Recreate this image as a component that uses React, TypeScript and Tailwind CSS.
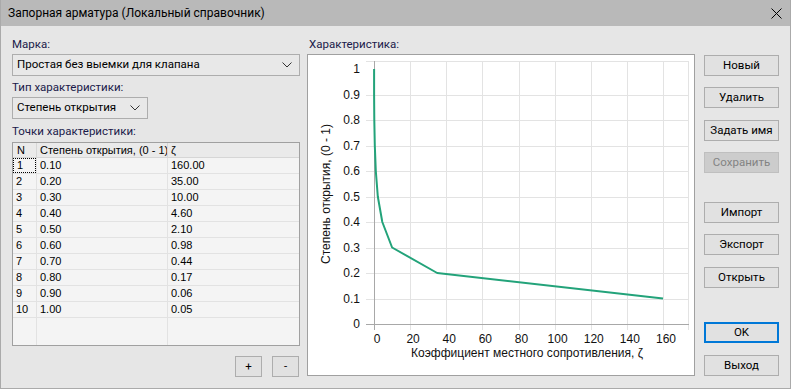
import React from "react";

const rows = [
  ["1", "0.10", "160.00"],
  ["2", "0.20", "35.00"],
  ["3", "0.30", "10.00"],
  ["4", "0.40", "4.60"],
  ["5", "0.50", "2.10"],
  ["6", "0.60", "0.98"],
  ["7", "0.70", "0.44"],
  ["8", "0.80", "0.17"],
  ["9", "0.90", "0.06"],
  ["10", "1.00", "0.05"],
];

// chart scale (svg coords, origin inside the chart frame)
const X0 = 66;
const Y0 = 269;
const sx = (z: number) => X0 + z * (289 / 160);
const sy = (v: number) => Y0 - v * 255;

const Chevron = () => (
  <svg width="10" height="6" viewBox="0 0 10 6" className="shrink-0">
    <polyline points="0.5,0.5 5,5 9.5,0.5" fill="none" stroke="#333" strokeWidth="1" />
  </svg>
);

const Btn = ({ label, className = "" }: { label: string; className?: string }) => (
  <div
    className={`h-[21px] w-[75px] flex items-center justify-center border border-[#adadad] bg-[#e1e1e1] text-[11.5px] text-black ${className}`}
  >
    {label}
  </div>
);

const Chart = () => {
  const pts = rows.map((r) => [parseFloat(r[2]), parseFloat(r[1])]);
  const line = pts.map(([z, v]) => `${sx(z).toFixed(1)},${sy(v).toFixed(1)}`).join(" ");
  return (
    <svg width="386" height="320" className="block" style={{ fontFamily: '"Liberation Sans", Arial, sans-serif' }}>
      {/* grid */}
      <line x1="58" y1="6.5" x2="381" y2="6.5" stroke="#e3e3e3" />
      {[1, 2, 3, 4, 5, 6, 7, 8, 9].map((k) => (
        <line key={"h" + k} x1="58" y1={Math.round(sy(k / 10)) + 0.5} x2="381" y2={Math.round(sy(k / 10)) + 0.5} stroke="#e3e3e3" />
      ))}
      {[1, 2, 3, 4, 5, 6, 7, 8].map((k) => (
        <line key={"v" + k} x1={Math.round(sx(k * 20)) + 0.5} y1="6" x2={Math.round(sx(k * 20)) + 0.5} y2="275" stroke="#e3e3e3" />
      ))}
      <line x1="380.5" y1="6" x2="380.5" y2="275" stroke="#e3e3e3" />
      {/* axes */}
      <line x1={X0 + 0.5} y1="6" x2={X0 + 0.5} y2="275" stroke="#a8a8a8" />
      <line x1="58" y1={Y0 + 0.5} x2="381" y2={Y0 + 0.5} stroke="#a8a8a8" />
      {/* y labels */}
      {[0, 1, 2, 3, 4, 5, 6, 7, 8, 9, 10].map((k) => (
        <text key={"yl" + k} x="52" y={sy(k / 10) + 4} textAnchor="end" fontSize="12" fill="#111">
          {k === 0 ? "0" : k === 10 ? "1" : (k / 10).toFixed(1)}
        </text>
      ))}
      {/* x labels */}
      {[0, 1, 2, 3, 4, 5, 6, 7, 8].map((k) => (
        <text key={"xl" + k} x={sx(k * 20) + 3} y="288" textAnchor="middle" fontSize="12" fill="#111">
          {k * 20}
        </text>
      ))}
      <text x="219" y="302" textAnchor="middle" fontSize="12" fill="#111">
        Коэффициент местного сопротивления, ζ
      </text>
      <text x="0" y="0" transform="translate(22 139) rotate(-90)" textAnchor="middle" fontSize="12" fill="#111">
        Степень открытия, (0 - 1)
      </text>
      {/* curve */}
      <polyline points={line} fill="none" stroke="#23a37a" strokeWidth="2" strokeLinejoin="round" />
    </svg>
  );
};

export default function App() {
  return (
    <div
      className="w-[791px] h-[389px] flex flex-col border-l border-r border-b border-[#aaaaaa] bg-[#e6e6e6] text-[11.5px] text-black overflow-hidden"
      style={{ fontFamily: 'Roboto, "Noto Sans", sans-serif' }}
    >
      {/* Title bar */}
      <div className="h-[26px] shrink-0 bg-[#b9b9b9] flex items-center justify-between pl-[7px] pr-[8px]">
        <span className="text-[12px] leading-none">Запорная арматура (Локальный справочник)</span>
        <svg width="11" height="11" viewBox="0 0 11 11">
          <path d="M0.5 0.5 L10.5 10.5 M10.5 0.5 L0.5 10.5" stroke="#000" strokeWidth="1" />
        </svg>
      </div>

      <div className="flex flex-1 pl-[11px]">
        {/* Left column */}
        <div className="w-[288px] flex flex-col">
          <div className="h-[16px] mt-[10px] leading-[16px] text-[#1a1a4a]">Марка:</div>
          <div className="mt-[2px] h-[22px] border border-[#adadad] bg-[#e8e8e8] flex items-center justify-between pl-[4px] pr-[7px]">
            <span>Простая без выемки для клапана</span>
            <Chevron />
          </div>
          <div className="h-[16px] mt-[3px] leading-[16px] text-[#1a1a4a]">Тип характеристики:</div>
          <div className="mt-[2px] h-[22px] w-[136px] border border-[#adadad] bg-[#e8e8e8] flex items-center justify-between pl-[4px] pr-[7px]">
            <span>Степень открытия</span>
            <Chevron />
          </div>
          <div className="h-[16px] mt-[4px] leading-[16px] text-[#1a1a4a]">Точки характеристики:</div>
          {/* Table */}
          <div
            className="mt-[3px] h-[204px] border border-[#a0a0a0] bg-[#f4f4f4] flex flex-col text-[11px]"
            style={{ fontFamily: '"Liberation Sans", Arial, sans-serif' }}
          >
            <div className="flex h-[15px] bg-[#eaeaea] border-b border-[#d6d6d6] leading-[14px]">
              <div className="w-[24px] border-r border-[#d6d6d6] pl-[4px]">N</div>
              <div className="w-[131px] border-r border-[#d6d6d6] pl-[3px] whitespace-nowrap overflow-hidden">Степень открытия, (0 - 1)</div>
              <div className="flex-1 pl-[3px]">ζ</div>
            </div>
            {rows.map((r, i) => (
              <div key={r[0]} className="flex h-[16px] border-b border-[#e2e2e2] leading-[15px]">
                <div className="w-[24px] border-r border-[#e2e2e2] flex">
                  <span
                    className={`flex-1 pl-[3px] ${i === 0 ? "border border-dotted border-black leading-[13px]" : ""}`}
                  >
                    {r[0]}
                  </span>
                </div>
                <div className="w-[131px] border-r border-[#e2e2e2] pl-[3px]">{r[1]}</div>
                <div className="flex-1 pl-[3px]">{r[2]}</div>
              </div>
            ))}
            <div className="flex flex-1">
              <div className="w-[24px] border-r border-[#e2e2e2]" />
              <div className="w-[131px] border-r border-[#e2e2e2]" />
              <div className="flex-1" />
            </div>
          </div>
          <div className="mt-[10px] flex justify-end gap-[10px] pr-[1px]">
            <div className="w-[27px] h-[21px] border border-[#adadad] bg-[#e1e1e1] flex items-center justify-center">+</div>
            <div className="w-[27px] h-[21px] border border-[#adadad] bg-[#e1e1e1] flex items-center justify-center">-</div>
          </div>
        </div>

        {/* Chart column */}
        <div className="w-[388px] ml-[7px] flex flex-col">
          <div className="h-[16px] mt-[10px] leading-[16px] pl-[2px] text-[#1a1a4a]">Характеристика:</div>
          <div className="mt-[2px] h-[322px] border border-[#a0a0a0] bg-white">
            <Chart />
          </div>
        </div>

        {/* Right buttons */}
        <div className="ml-[9px] flex flex-col">
          <Btn label="Новый" className="mt-[29px]" />
          <Btn label="Удалить" className="mt-[11px]" />
          <Btn label="Задать имя" className="mt-[12px]" />
          <Btn label="Сохранить" className="mt-[11px] !bg-[#cccccc] !border-[#bfbfbf] !text-[#838383]" />
          <Btn label="Импорт" className="mt-[29px]" />
          <Btn label="Экспорт" className="mt-[11px]" />
          <Btn label="Открыть" className="mt-[12px]" />
          <Btn label="OK" className="mt-[34px] !border-2 !border-[#0078d7]" />
          <Btn label="Выход" className="mt-[12px]" />
        </div>
      </div>
    </div>
  );
}
